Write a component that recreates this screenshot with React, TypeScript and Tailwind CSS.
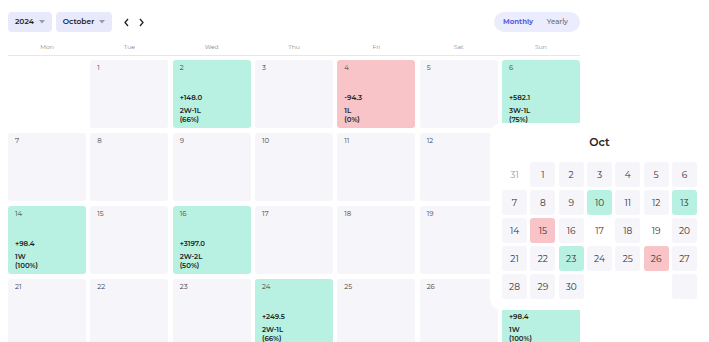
import React from "react"

type Day = {
  n: number
  pnl?: string
  wl?: string
  pct?: string
  tone?: "win" | "loss"
}

const weekdays = ["Mon", "Tue", "Wed", "Thu", "Fri", "Sat", "Sun"]

const days: (Day | null)[] = [
  null,
  { n: 1 },
  { n: 2, pnl: "+148.0", wl: "2W-1L", pct: "(66%)", tone: "win" },
  { n: 3 },
  { n: 4, pnl: "-94.3", wl: "1L", pct: "(0%)", tone: "loss" },
  { n: 5 },
  { n: 6, pnl: "+582.1", wl: "3W-1L", pct: "(75%)", tone: "win" },
  { n: 7 },
  { n: 8 },
  { n: 9 },
  { n: 10 },
  { n: 11 },
  { n: 12 },
  { n: 13 },
  { n: 14, pnl: "+98.4", wl: "1W", pct: "(100%)", tone: "win" },
  { n: 15 },
  { n: 16, pnl: "+3197.0", wl: "2W-2L", pct: "(50%)", tone: "win" },
  { n: 17 },
  { n: 18 },
  { n: 19 },
  { n: 20 },
  { n: 21 },
  { n: 22 },
  { n: 23 },
  { n: 24, pnl: "+249.5", wl: "2W-1L", pct: "(66%)", tone: "win" },
  { n: 25 },
  { n: 26 },
  { n: 27, pnl: "+98.4", wl: "1W", pct: "(100%)", tone: "win" },
]

// mini month picker: "" = plain, "g" = gray tile, "w" = green, "l" = red
const mini: { n: string; k: string }[] = [
  { n: "31", k: "muted" }, { n: "1", k: "g" }, { n: "2", k: "g" }, { n: "3", k: "g" }, { n: "4", k: "g" }, { n: "5", k: "g" }, { n: "6", k: "g" },
  { n: "7", k: "g" }, { n: "8", k: "g" }, { n: "9", k: "g" }, { n: "10", k: "w" }, { n: "11", k: "g" }, { n: "12", k: "g" }, { n: "13", k: "w" },
  { n: "14", k: "g" }, { n: "15", k: "l" }, { n: "16", k: "g" }, { n: "17", k: "" }, { n: "18", k: "g" }, { n: "19", k: "" }, { n: "20", k: "g" },
  { n: "21", k: "g" }, { n: "22", k: "g" }, { n: "23", k: "w" }, { n: "24", k: "g" }, { n: "25", k: "g" }, { n: "26", k: "l" }, { n: "27", k: "g" },
  { n: "28", k: "g" }, { n: "29", k: "g" }, { n: "30", k: "g" }, { n: "", k: "" }, { n: "", k: "" }, { n: "", k: "" }, { n: "", k: "g" },
]

function Caret() {
  return (
    <svg width="6" height="4" viewBox="0 0 6 4" className="ml-[5px]">
      <path d="M0 0h6L3 3.5z" fill="#9a9ab0" />
    </svg>
  )
}

function DayCell({ d }: { d: Day | null }) {
  if (!d) return <div className="h-[68px]" />
  const bg = d.tone === "win" ? "bg-[#b8f1e1]" : d.tone === "loss" ? "bg-[#f8c4c7]" : "bg-[#f6f5fa]"
  return (
    <div className={`h-[68px] rounded-[3px] ${bg} px-[7px] pt-[3px] pb-[4px] flex flex-col justify-between`}>
      <span className="text-[7px] text-[#444]">{d.n}</span>
      {d.pnl && (
        <div className="text-[7px] font-semibold text-[#222] leading-[9px]">
          <div className="mb-[4px]">{d.pnl}</div>
          <div>{d.wl}</div>
          <div>{d.pct}</div>
        </div>
      )}
    </div>
  )
}

export default function App() {
  return (
    <div className="relative w-[709px] h-[342px] overflow-hidden bg-white" style={{ fontFamily: "Montserrat, 'Open Sans', sans-serif" }}>
      <div className="w-[588px] px-2 pt-3">
        <div className="flex items-center justify-between h-5">
          <div className="flex items-center gap-1">
            <button className="h-5 px-[7px] rounded-[4px] bg-[#e9e9fc] flex items-center text-[7.5px] font-semibold text-[#222]">
              2024 <Caret />
            </button>
            <button className="h-5 px-[7px] rounded-[4px] bg-[#e9e9fc] flex items-center text-[7.5px] font-semibold text-[#222]">
              October <Caret />
            </button>
            <div className="flex items-center gap-[8px] ml-[7px] text-[#222]">
              <svg width="7" height="9" viewBox="0 0 7 9"><path d="M5 1L2 4.5 5 8" fill="none" stroke="currentColor" strokeWidth="1.3" /></svg>
              <svg width="7" height="9" viewBox="0 0 7 9"><path d="M2 1l3 3.5L2 8" fill="none" stroke="currentColor" strokeWidth="1.3" /></svg>
            </div>
          </div>
          <div className="h-5 w-[86px] rounded-full bg-[#ebecfd] flex items-center justify-between px-[9px] text-[7px]">
            <span className="font-bold text-[#5a5fe0]">Monthly</span>
            <span className="font-medium text-[#666] mr-[3px]">Yearly</span>
          </div>
        </div>

        <div className="grid grid-cols-7 gap-x-[4.33px] mt-[11px] pb-[3px] border-b border-[#e6e6ec]">
          {weekdays.map((w) => (
            <div key={w} className="text-center text-[6px] text-[#888]">{w}</div>
          ))}
        </div>

        <div className="grid grid-cols-7 gap-x-[4.33px] gap-y-[5px] mt-[4px]">
          {days.map((d, i) => (
            <DayCell key={i} d={d} />
          ))}
        </div>
      </div>

      <div className="absolute left-[490px] top-[123px] w-[219px] h-[187px] bg-white rounded-l-[12px] px-3">
        <div className="text-center text-[11px] font-semibold text-[#222] pt-[11px] h-[39px]">Oct</div>
        <div className="grid grid-cols-7 gap-x-[3.3px] gap-y-[3px]">
          {mini.map((m, i) => {
            const bg =
              m.k === "g" ? "bg-[#f6f5fa]" : m.k === "w" ? "bg-[#b8f1e1]" : m.k === "l" ? "bg-[#f8c4c7]" : ""
            const color = m.k === "muted" ? "text-[#999]" : "text-[#333]"
            return (
              <div key={i} className={`h-[25px] rounded-[3px] flex items-center justify-center text-[9px] ${bg} ${color}`}>
                {m.n}
              </div>
            )
          })}
        </div>
      </div>
    </div>
  )
}
